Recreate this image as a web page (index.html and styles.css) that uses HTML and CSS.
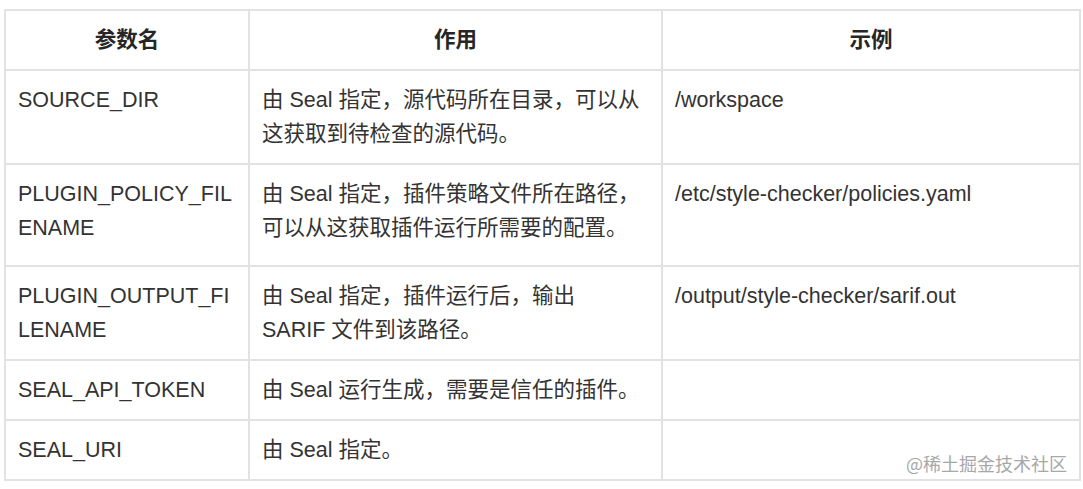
FILE: index.html
```html
<!DOCTYPE html>
<html lang="zh-CN">
<head>
<meta charset="utf-8">
<title>参数表</title>
<link rel="stylesheet" href="styles.css">
</head>
<body>
<div class="page">
  <table class="params">
    <thead>
      <tr>
        <th class="c1">参数名</th>
        <th class="c2">作用</th>
        <th class="c3">示例</th>
      </tr>
    </thead>
    <tbody>
      <tr>
        <td class="name">SOURCE_DIR</td>
        <td class="desc">由 Seal 指定，源代码所在目录，可以从这获取到待检查的源代码。</td>
        <td>/workspace</td>
      </tr>
      <tr class="tall">
        <td class="name">PLUGIN_POLICY_FILENAME</td>
        <td class="desc">由 Seal 指定，插件策略文件所在路径，可以从这获取插件运行所需要的配置。</td>
        <td>/etc/style-checker/policies.yaml</td>
      </tr>
      <tr>
        <td class="name">PLUGIN_OUTPUT_FILENAME</td>
        <td class="desc">由 Seal 指定，插件运行后，输出 SARIF 文件到该路径。</td>
        <td>/output/style-checker/sarif.out</td>
      </tr>
      <tr>
        <td class="name">SEAL_API_TOKEN</td>
        <td class="desc">由 Seal 运行生成，需要是信任的插件。</td>
        <td></td>
      </tr>
      <tr>
        <td class="name">SEAL_URI</td>
        <td class="desc">由 Seal 指定。</td>
        <td></td>
      </tr>
    </tbody>
  </table>
  <div class="watermark">@稀土掘金技术社区</div>
</div>
</body>
</html>
```

FILE: styles.css
```css
html, body {
  margin: 0;
  padding: 0;
  background: #ffffff;
}

.page {
  position: relative;
  padding: 9px 0 0 4px;
  width: 1083px;
  height: 489px;
  box-sizing: border-box;
  font-family: "Liberation Sans", Arial, "Noto Sans CJK SC", sans-serif;
  color: #333333;
}

.params {
  width: 1077px;
  table-layout: fixed;
  border-collapse: separate;
  border-spacing: 0;
  border-top: 2px solid #e2e2e2;
  border-left: 2px solid #e2e2e2;
  font-size: 21.5px;
  line-height: 34px;
}

.params th,
.params td {
  box-sizing: border-box;
  border-right: 2px solid #e2e2e2;
  border-bottom: 2px solid #e2e2e2;
  padding: 12px;
  vertical-align: top;
  text-align: left;
  word-break: normal;
  overflow-wrap: anywhere;
}

.params td.name {
  word-break: break-all;
}

.params td.desc {
  padding-right: 20px;
}

.params th {
  height: 60px;
  font-weight: bold;
  text-align: center;
  color: #262626;
}

.params td {
  height: 60px;
}

.params .c1 { width: 244px; }
.params .c2 { width: 413px; }
.params .c3 { width: 418px; }

.params tr.tall td {
  padding-bottom: 20px;
}

.watermark {
  position: absolute;
  right: 16px;
  top: 451px;
  font-family: "Noto Sans CJK SC", sans-serif;
  font-size: 18px;
  line-height: 24px;
  color: #a8a8a8;
}
```
